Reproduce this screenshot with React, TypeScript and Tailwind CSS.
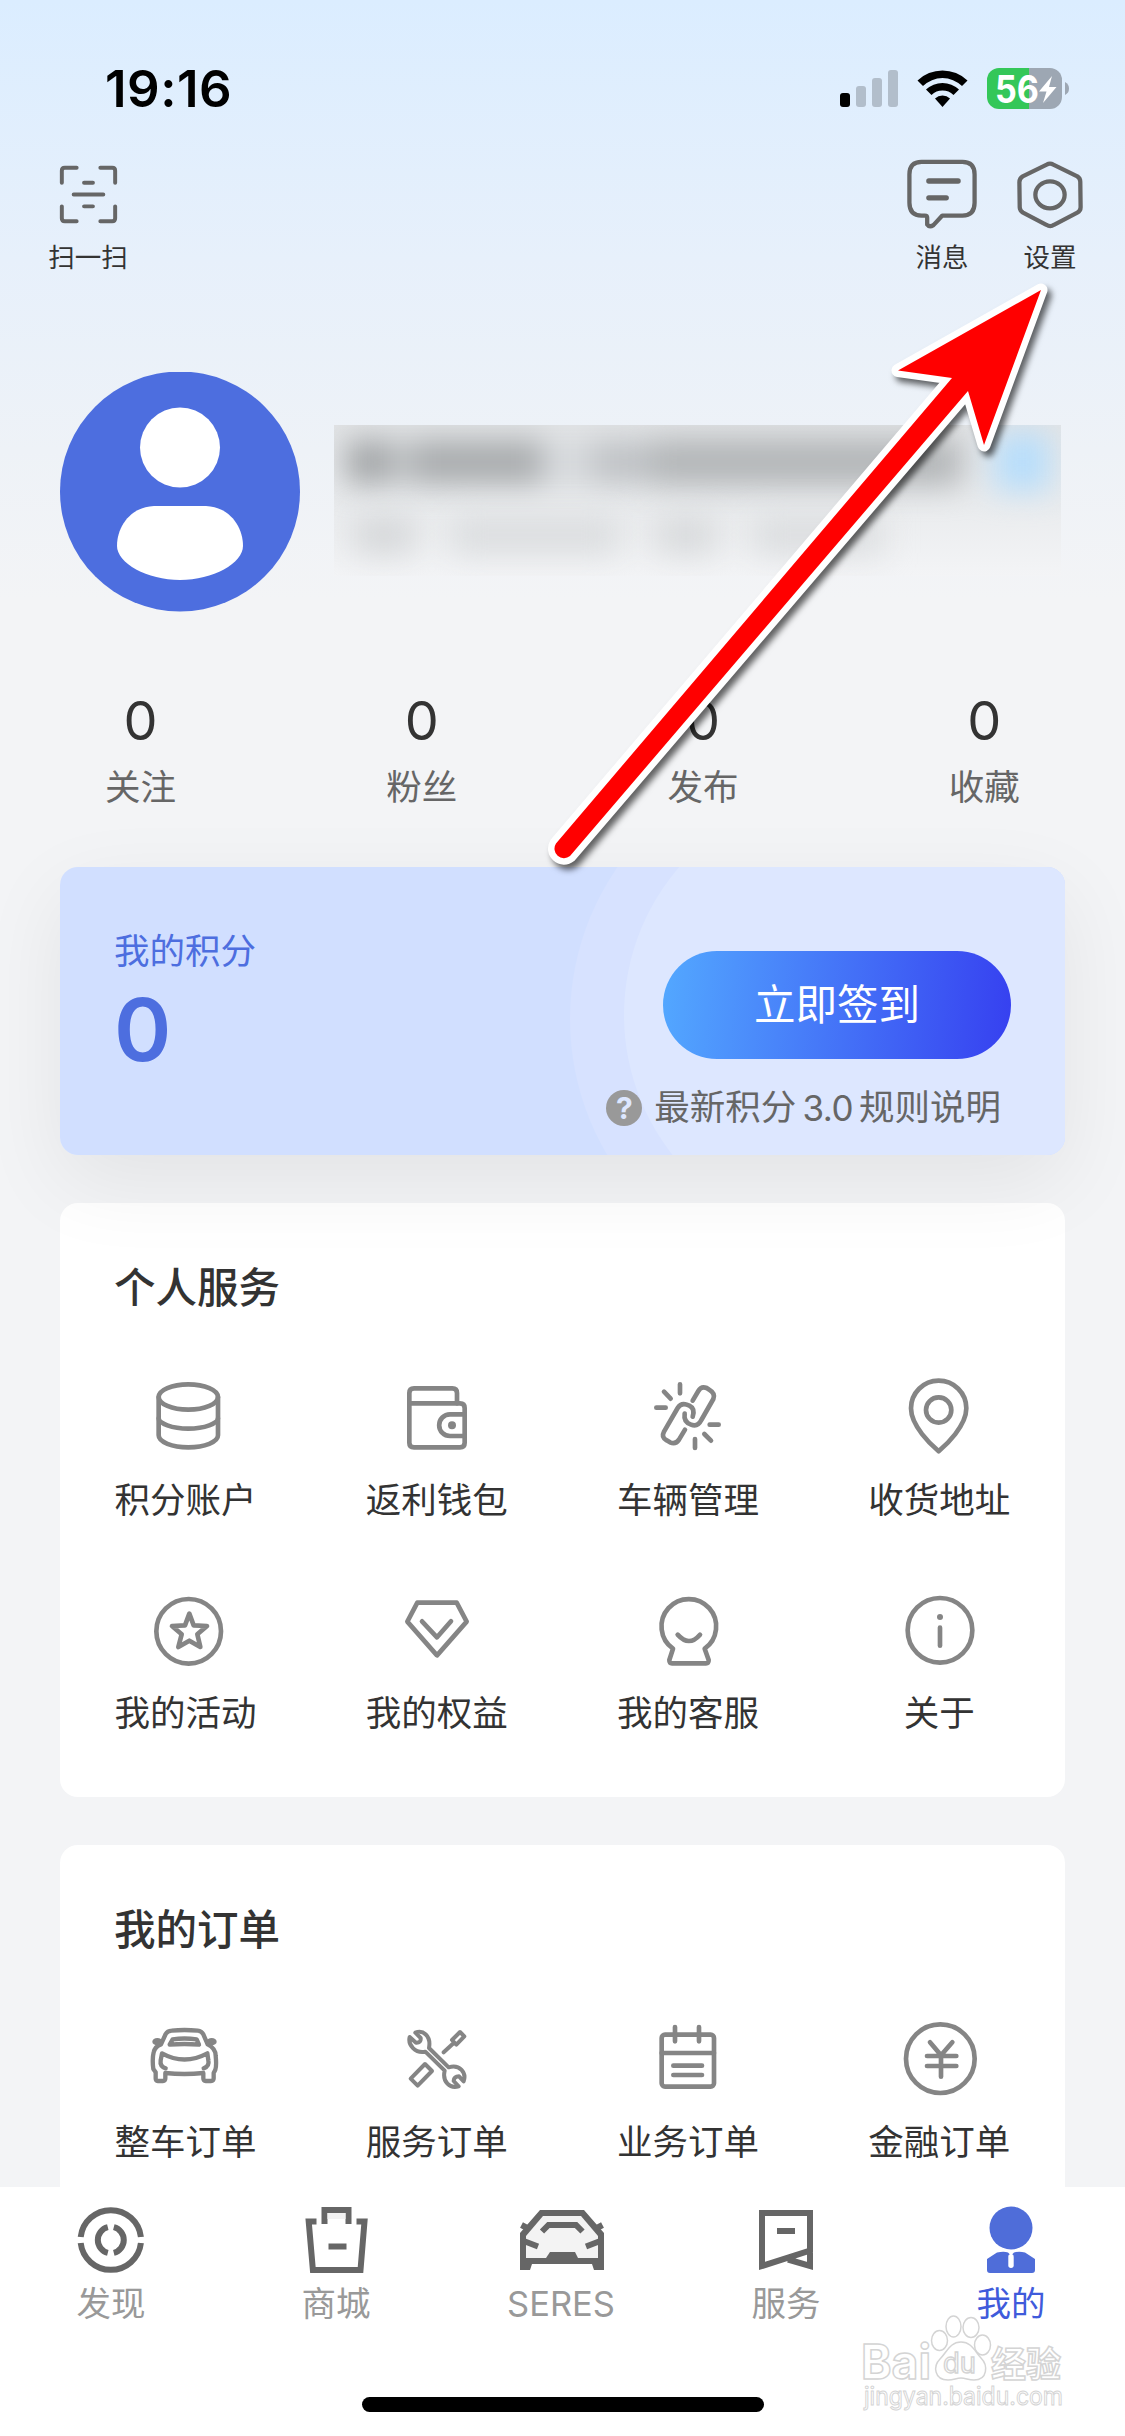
import type { ReactNode } from "react";

type IconProps = { box: string; children: ReactNode };
type Entry = { label: string; icon: ReactNode };

// thin outlined icon used in the service and order grids
function LineIcon({ box, children }: IconProps) {
  return (
    <svg
      viewBox={box}
      className="h-[90px] w-[90px] text-[#858585]"
      fill="none"
      stroke="currentColor"
      strokeWidth={14}
      strokeLinecap="round"
      strokeLinejoin="round"
    >
      {children}
    </svg>
  );
}

function HeaderIcon({ box, width, children }: IconProps & { width: number }) {
  return (
    <svg
      viewBox={box}
      className="h-20 w-20 text-[#666666]"
      fill="none"
      stroke="currentColor"
      strokeWidth={width}
      strokeLinecap="round"
      strokeLinejoin="round"
    >
      {children}
    </svg>
  );
}

function TabIcon({ box, children }: IconProps) {
  return (
    <svg
      viewBox={box}
      className="h-[72px] w-[90px] text-[#666666]"
      fill="none"
      stroke="currentColor"
      strokeWidth={6}
    >
      {children}
    </svg>
  );
}

const stats = [
  { label: "关注", value: 0 },
  { label: "粉丝", value: 0 },
  { label: "发布", value: 0 },
  { label: "收藏", value: 0 },
];

const services: Entry[] = [
  {
    label: "积分账户",
    icon: (
      <LineIcon box="242 393 270 270">
        <ellipse cx="384" cy="471" rx="89" ry="38" />
        <path d="M295 471V586C295 606 335 622 384 622S473 606 473 586V471" />
        <path d="M295 535C295 550 335 566 384 566S473 550 473 535" />
      </LineIcon>
    ),
  },
  {
    label: "返利钱包",
    icon: (
      <LineIcon box="996 393 270 270">
        <path d="M1048 490V459q0-14 14-14h115q14 0 14 14V490" />
        <path d="M1048 490H1200q14 0 14 14V608q0 14-14 14H1062q-14 0-14-14Z" />
        <path d="M1214 523H1170a32 32 0 0 0 0 65H1214" />
        <circle cx="1176" cy="556" r="12" fill="currentColor" stroke="none" />
      </LineIcon>
    ),
  },
  {
    label: "车辆管理",
    icon: (
      <LineIcon box="249 93 270 270">
        <path d="M360 133V160M312 155L332 176M289 203H317M449 254H476M433 282L453 302M405 297V324" />
        <path d="M398 182L415 153Q424 137 440 144L448 149Q467 160 460 177L424 240Q413 262 393 254Q370 246 374 221" />
        <path d="M398 230Q406 206 388 197L380 194Q363 188 353 204L312 275Q303 292 320 301L330 307Q347 314 357 299L375 269" />
      </LineIcon>
    ),
  },
  {
    label: "收货地址",
    icon: (
      <LineIcon box="1003 93 270 270">
        <path d="M1137 334C1115 315 1054 258 1054 205A83 83 0 0 1 1220 205C1220 258 1159 315 1137 334Z" />
        <circle cx="1137" cy="210" r="38" />
      </LineIcon>
    ),
  },
  {
    label: "我的活动",
    icon: (
      <LineIcon box="242 72 270 270">
        <circle cx="385" cy="214" r="97" />
        <path d="M387 161L400 196L440 198L411 223L420 261L387 242L354 261L364 223L335 198L374 196Z" />
      </LineIcon>
    ),
  },
  {
    label: "我的权益",
    icon: (
      <LineIcon box="996 72 270 270">
        <path d="M1072 128H1190L1220 185L1131 286L1042 185Z" />
        <path d="M1086 184L1131 232L1173 184" />
      </LineIcon>
    ),
  },
  {
    label: "我的客服",
    icon: (
      <LineIcon box="249 72 270 270">
        <path d="M339 266A82 82 0 1 1 434 266L446 300Q446 310 438 310H336Q328 310 328 300Z" />
        <path d="M353 224Q387 262 420 224" />
      </LineIcon>
    ),
  },
  {
    label: "关于",
    icon: (
      <LineIcon box="1003 72 270 270">
        <circle cx="1141" cy="211" r="97" />
        <circle cx="1141" cy="171" r="9" fill="currentColor" stroke="none" />
        <path d="M1141 203V257" />
      </LineIcon>
    ),
  },
];

const orders: Entry[] = [
  {
    label: "整车订单",
    icon: (
      <LineIcon box="242 462 270 270">
        <g strokeWidth={13}>
          <path d="M302 556L316 525Q321 516 334 515Q372 511 412 515Q424 516 429 526L442 556Q466 568 466 590Q469 620 465 632L460 642V658Q460 666 452 666H436Q429 666 429 658V642Q372 648 315 642V658Q315 666 308 666H292Q286 666 286 658V640L279 630Q275 600 280 580Q284 562 302 556Z" />
          <path d="M328 557L337 541Q372 536 409 541L416 557Q372 553 328 557Z" />
          <path d="M316 628Q298 622 301 604L305 583Q372 620 441 583L444 604Q448 622 430 628" />
        </g>
        <ellipse cx="291" cy="548" rx="15" ry="11" fill="currentColor" stroke="none" />
        <ellipse cx="454" cy="548" rx="15" ry="11" fill="currentColor" stroke="none" />
      </LineIcon>
    ),
  },
  {
    label: "服务订单",
    icon: (
      <LineIcon box="996 462 270 270">
        <g strokeWidth={12}>
          <path d="M1066 521C1088 511 1114 530 1107 567L1166 625C1200 615 1220 642 1211 667L1197 652Q1182 652 1181 666L1196 682C1170 690 1146 668 1154 635L1096 578C1066 584 1043 558 1049 534L1068 551Q1084 552 1082 537Z" />
          <path d="M1200 519L1213 532L1189 557L1176 543ZM1182 551L1151 580" />
          <path d="M1095 615L1116 636L1073 680L1052 659Z" />
        </g>
      </LineIcon>
    ),
  },
  {
    label: "业务订单",
    icon: (
      <LineIcon box="249 102 270 270">
        <rect x="305" y="167" width="157" height="156" rx="10" />
        <path d="M305 222H462M345 144V187M417 144V187M340 260H426M340 288H426" />
      </LineIcon>
    ),
  },
  {
    label: "金融订单",
    icon: (
      <LineIcon box="1003 102 270 270">
        <circle cx="1142" cy="239" r="103" />
        <path d="M1111 190L1144 229L1178 190M1144 229V293M1102 231H1190M1102 261H1190" />
      </LineIcon>
    ),
  },
];

const tabs: (Entry & { active?: boolean })[] = [
  {
    label: "发现",
    icon: (
      <TabIcon box="68.5 2204 90 72">
        <path d="M81.2 2237A30.3 30.3 0 0 1 141.4 2237M81.2 2243A30.3 30.3 0 0 0 141.4 2243" />
        <path d="M108.3 2227.2A13.2 13.2 0 0 0 108.3 2252.8M114.3 2227.2A13.2 13.2 0 0 1 114.3 2252.8" />
      </TabIcon>
    ),
  },
  {
    label: "商城",
    icon: (
      <TabIcon box="292.5 2204 90 72">
        <path d="M324 2224V2210H348V2224" />
        <path d="M327 2213H345V2219H327Z" fill="#f2f2f2" stroke="none" />
        <path d="M316 2221.5H308.2L312.4 2270H360L364 2221.5H356M328 2246.5H346" />
      </TabIcon>
    ),
  },
  {
    label: "SERES",
    icon: (
      <TabIcon box="518 2204 90 72">
        <path
          d="M520 2270V2233L540 2210H584L604 2233V2270H594L592 2264H532L530 2270Z"
          fill="currentColor"
          stroke="none"
        />
        <path d="M526 2258V2236L543 2216H581L598 2236V2258Z" fill="#f3f3f3" stroke="none" />
        <path d="M546 2258L550 2252H575L578 2258Z" fill="currentColor" stroke="none" />
        <path d="M542 2231.5L548.5 2225H576L582.5 2231.5M525 2241.5L538 2246.5M599 2241.5L586 2246.5M521.5 2225L528 2228.5M602.5 2225L596 2228.5" />
      </TabIcon>
    ),
  },
  {
    label: "服务",
    icon: (
      <TabIcon box="743 2204 90 72">
        <path d="M762 2213H810V2250.5L762 2266ZM810 2250V2266L788 2259.5M777 2231H795" />
      </TabIcon>
    ),
  },
  {
    label: "我的",
    active: true,
    icon: (
      <TabIcon box="968 2204 90 72">
        <g fill="#4f6dd9" stroke="none">
          <circle cx="1011" cy="2228" r="21.5" />
          <path d="M987 2259L997 2252.5Q1004 2251 1008 2252.5L1011 2255.5L1014 2252.5Q1019 2251 1025 2252.5L1035 2259V2270q0 3-3 3H990q-3 0-3-3Z" />
        </g>
        <rect x="1008.3" y="2254" width="5.4" height="14" rx="2.7" fill="#fff" stroke="none" />
      </TabIcon>
    ),
  },
];

function StatusBar() {
  return (
    <div className="flex h-[155px] shrink-0 items-start justify-between pl-[105px] pr-[54px] pt-[60px]">
      <span className="text-[51px] font-semibold leading-[58px] tracking-[0.5px] text-black">19:16</span>
      <svg viewBox="838 60 233 60" className="h-[60px] w-[233px]">
        <rect x="840" y="93" width="10" height="14" rx="3" />
        <g fill="#b2becb">
          <rect x="856" y="86" width="10" height="21" rx="3" />
          <rect x="872" y="78" width="10" height="29" rx="3" />
          <rect x="888" y="70" width="10" height="37" rx="3" />
        </g>
        <path d="M917.5 80.5A36 36 0 0 1 967.5 80.5L962 86A28 28 0 0 0 923 86Z" />
        <path d="M926 89.5A24 24 0 0 1 959 89.5L953.5 95A16 16 0 0 0 931.5 95Z" />
        <path d="M935 98.5A11 11 0 0 1 950 98.5L942.5 107Z" />
        <path d="M999 68H1029V109H999A12 12 0 0 1 987 97V80A12 12 0 0 1 999 68Z" fill="#34c759" />
        <path d="M1029 68H1050A12 12 0 0 1 1062 80V97A12 12 0 0 1 1050 109H1029Z" fill="#9da7b3" />
        <path d="M1065 82Q1069 84 1069 88.5T1065 95Z" fill="#9da7b3" />
        <text
          x="995"
          y="102.5"
          fill="#fff"
          fontSize="38"
          fontWeight="700"
          textLength="44"
          lengthAdjust="spacingAndGlyphs"
        >
          56
        </text>
        <path d="M1052 76L1039 91.5H1046.5L1043 103L1056.5 87H1049Z" fill="#fff" />
      </svg>
    </div>
  );
}

function HeaderAction({ label, children }: { label: string; children: ReactNode }) {
  return (
    <div className="flex flex-col items-center">
      {children}
      <span className="mt-[5px] whitespace-nowrap text-[26.5px] leading-9 text-[#333333]">{label}</span>
    </div>
  );
}

function Header() {
  return (
    <div className="flex h-[120px] shrink-0 justify-between pl-12 pr-[35px]">
      <HeaderAction label="扫一扫">
        <HeaderIcon box="48.5 155 80 80" width={4}>
          <path d="M62 183V171q0-3 3-3H77M101 168H113q3 0 3 3V183M62 207V219q0 3 3 3H77M101 222H113q3 0 3-3V207" />
          <path d="M84.5 183H93.5M74 195H104M84.5 207H93.5" />
        </HeaderIcon>
      </HeaderAction>
      <div className="flex gap-7">
        <HeaderAction label="消息">
          <HeaderIcon box="366 345 240 240" width={13}>
            <path d="M424 366H548Q585 366 585 404V490Q585 529 548 529H487L460 558Q448 566 441 556V536Q441 529 434 529H424Q387 529 387 490V404Q387 366 424 366Z" />
            <path d="M446 424H535M446 475H499" strokeWidth={16} />
          </HeaderIcon>
        </HeaderAction>
        <HeaderAction label="设置">
          <HeaderIcon box="690 345 240 240" width={13}>
            <path d="M800 374Q810 368 820 374L893 410Q902 416 902 426L903 504Q903 515 893 520L822 557Q811 565 799 557L728 520Q718 514 718 504L717 428Q717 416 727 410Z" />
            <ellipse cx="810" cy="466" rx="44.5" ry="41" />
          </HeaderIcon>
        </HeaderAction>
      </div>
    </div>
  );
}

function Profile() {
  return (
    <div className="mt-[97px] flex shrink-0 gap-[34px] pl-[60px]">
      <svg viewBox="60 372 240 240" className="h-60 w-60">
        <circle cx="180" cy="491.5" r="120" fill="#4d6edf" />
        <circle cx="180" cy="447.5" r="40" fill="#fff" />
        <path
          d="M154 506H206C230 507 243 527 243 546C243 563 213 580 180 580S117 563 117 546C117 527 130 507 154 506Z"
          fill="#fff"
        />
      </svg>
      {/* masked nickname and id */}
      <div className="mt-[53px] h-[151px] w-[727px] overflow-hidden bg-linear-to-b from-[#e2e4e6] via-[#e9ebed] to-[#f3f4f6]">
        <div className="flex h-[73px] items-center pl-[12px] blur-[15px]">
          <div className="h-11 w-[46px] bg-[#a3a6a8]" />
          <div className="h-11 w-5 bg-[#c6c9cb]" />
          <div className="h-11 w-[130px] bg-[#a8abad]" />
          <div className="h-11 w-[50px] bg-[#d6d9dc]" />
          <div className="h-11 w-[60px] bg-[#bfc2c5]" />
          <div className="h-12 w-[310px] bg-[#b3b6b8]" />
          <div className="ml-8 h-[58px] w-[56px] bg-[#b8defb]" />
        </div>
        <div className="flex h-[74px] items-center gap-9 pl-5 blur-[16px]">
          <div className="h-9 w-[60px] bg-[#d3d5d7]" />
          <div className="h-9 w-[170px] bg-[#dadcde]" />
          <div className="h-9 w-[60px] bg-[#d6d8da]" />
          <div className="h-9 w-[130px] bg-[#dadcde]" />
        </div>
      </div>
    </div>
  );
}

function PointsCard() {
  return (
    <section className="relative z-10 mx-[60px] mt-[59px] h-72 shrink-0 rounded-[18px] shadow-[0_27px_86px_rgba(0,0,0,0.07)]">
      <svg viewBox="60 867 1005 288" className="absolute inset-0 h-72 w-[1005px] rounded-[18px]">
        <rect x="60" y="867" width="1005" height="288" fill="#d1dfff" />
        <path d="M1065 752H837A267 267 0 0 0 837 1286H1065Z" fill="#d7e2ff" />
        <path d="M1065 789H850A226 226 0 0 0 850 1241H1065Z" fill="#dde7ff" />
      </svg>
      <div className="relative flex justify-between px-[54px]">
        <div className="pt-[65px] text-[#4d6edf]">
          <p className="text-[35.5px] leading-10">我的积分</p>
          <p className="mt-[18px] text-[87px] font-semibold leading-[80px]">0</p>
        </div>
        <div className="flex flex-col items-end pt-[84px]">
          <button className="h-[108px] w-[348px] rounded-full bg-linear-[95deg,#53a8ff,#3640f0] text-[41.5px] text-white">
            立即签到
          </button>
          <div className="mt-[31px] flex h-9 items-center pr-[10px] text-[35.5px] leading-9 text-[#666666]">
            <span className="mr-3 flex h-9 w-9 items-center justify-center rounded-full bg-[#999999] text-[30px] font-bold text-[#dde7ff]">
              ?
            </span>
            <span>最新积分</span>
            <span className="mx-[6px] text-[35px] tracking-[-0.5px]">3.0</span>
            <span>规则说明</span>
          </div>
        </div>
      </div>
    </section>
  );
}

function EntryCard({ title, entries, className }: { title: string; entries: Entry[]; className: string }) {
  return (
    <section className={`mx-[60px] bg-white pt-[55px] ${className}`}>
      <h2 className="pl-[54px] text-[41.5px] font-medium leading-[60px] text-[#333333]">{title}</h2>
      <div className="mt-[53px] grid grid-cols-4 gap-y-[63px]">
        {entries.map((entry) => (
          <div key={entry.label} className="flex flex-col items-center">
            {entry.icon}
            <span className="mt-5 text-[35.5px] leading-10 text-[#333333]">{entry.label}</span>
          </div>
        ))}
      </div>
    </section>
  );
}

function TabBar() {
  return (
    <nav className="flex h-[249px] shrink-0 flex-col items-center bg-white pt-[17px]">
      <div className="grid w-full grid-cols-5">
        {tabs.map((tab) => (
          <div key={tab.label} className="flex flex-col items-center">
            {tab.icon}
            <span
              className={`mr-[3px] mt-2 text-[34.5px] leading-[39px] ${tab.active ? "text-[#3f5bdb]" : "text-[#999999]"}`}
            >
              {tab.label}
            </span>
          </div>
        ))}
      </div>
      <div className="mt-[74px] h-[15px] w-[402px] rounded-full bg-black" />
    </nav>
  );
}

function Pointer() {
  const shape = "M1041 290L984 445L968 391L570 856A9.5 9.5 0 0 1 556 843.5L952 378L898 370.5Z";
  return (
    <svg
      viewBox="530 260 560 640"
      className="absolute left-[530px] top-[260px] z-20 h-[640px] w-[560px] drop-shadow-[4px_5px_3px_rgba(0,0,0,0.6)]"
    >
      <path d={shape} fill="#fff" stroke="#fff" strokeWidth={13} strokeLinejoin="round" />
      <path d={shape} fill="#ff0000" />
    </svg>
  );
}

function Watermark() {
  return (
    <svg
      viewBox="855 2310 215 110"
      className="absolute left-[855px] top-[2310px] z-20 h-[110px] w-[215px] overflow-visible"
      fill="#fff"
      stroke="#d4d4d4"
      strokeWidth={1.5}
    >
      <text x="861" y="2379" fontSize="48" fontWeight="700" textLength="70" lengthAdjust="spacingAndGlyphs">
        Bai
      </text>
      <ellipse cx="939.5" cy="2340.5" rx="8" ry="10" />
      <ellipse cx="953.5" cy="2326.5" rx="7.5" ry="10.5" />
      <ellipse cx="971" cy="2327.5" rx="8" ry="10" />
      <ellipse cx="982.5" cy="2345" rx="8" ry="10" />
      <path d="M961 2342C972 2342 975 2352 981 2358C988 2365 988 2380 974 2380C968 2380 966 2378 961 2378S954 2380 948 2380C934 2380 933 2366 940 2359C947 2352 950 2342 961 2342Z" />
      <text x="943" y="2373" fontSize="29" textLength="33" lengthAdjust="spacingAndGlyphs">
        du
      </text>
      <text x="991" y="2377" fontSize="35" fontWeight="700">
        经验
      </text>
      <text x="864" y="2405" fontSize="25" strokeWidth={1} textLength="199" lengthAdjust="spacingAndGlyphs">
        jingyan.baidu.com
      </text>
    </svg>
  );
}

export default function App() {
  return (
    <div className="relative flex h-[2436px] w-[1125px] flex-col overflow-hidden bg-[#f3f4f6] bg-[linear-gradient(180deg,#dbedff_0px,#e7f0fb_260px,#eef2f7_450px,#f3f4f6_600px)] font-['Inter','Noto_Sans_CJK_SC',sans-serif]">
      <StatusBar />
      <Header />
      <Profile />
      <div className="mt-[78px] grid shrink-0 grid-cols-4 text-center">
        {stats.map((stat) => (
          <div key={stat.label}>
            <p className="text-[54px] leading-[61px] text-[#333333]">{stat.value}</p>
            <p className="mt-[17px] text-[35.5px] leading-10 text-[#666666]">{stat.label}</p>
          </div>
        ))}
      </div>
      <PointsCard />
      <EntryCard title="个人服务" entries={services} className="mt-12 h-[594px] shrink-0 rounded-[18px]" />
      <EntryCard title="我的订单" entries={orders} className="mt-12 min-h-0 flex-1 overflow-hidden rounded-t-[18px]" />
      <TabBar />
      <Pointer />
      <Watermark />
    </div>
  );
}
